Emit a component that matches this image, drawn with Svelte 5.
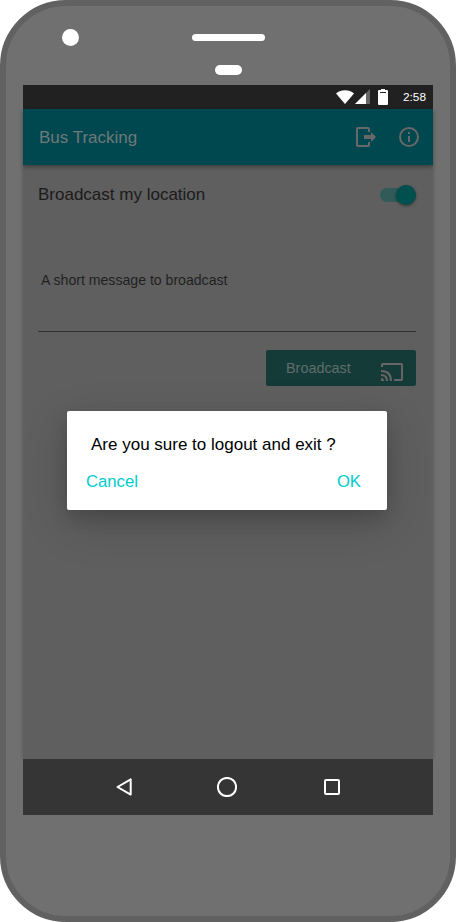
<script>
  let enabled = $state(true);
</script>

<div class="phone">
  <div class="top">
    <span class="camera"></span>
    <div class="ear"><span class="speaker"></span><span class="sensor"></span></div>
  </div>
  <div class="screen">
    <div class="status">
      <svg class="wifi" width="18" height="14" viewBox="0 0 18 14"><path d="M0 3.4C5-.9 13-.9 18 3.4L9 14z" fill="#fff"/></svg>
      <svg class="signal" width="15" height="15" viewBox="0 0 15 15"><path d="M0 15L15 0V15z" fill="#666"/><path d="M0 15L11 4V15z" fill="#fff"/></svg>
      <svg class="battery" width="10" height="16" viewBox="0 0 10 16"><path d="M1 1H3V0H7V1H9Q10 1 10 2V15Q10 16 9 16H1Q0 16 0 15V2Q0 1 1 1z" fill="#fff"/><path d="M2 3H8V4H2z" fill="#212121"/></svg>
      <span class="time">2:58</span>
    </div>
    <header>
      <h1>Bus Tracking</h1>
      <svg class="exit" width="22" height="22" viewBox="0 0 22 22"><path d="M14 6V3Q14 2 13 2H3Q2 2 2 3V19Q2 20 3 20H13Q14 20 14 19V16" fill="none" stroke="#686868" stroke-width="2"/><path d="M9 9H16V6L21 11L16 16V13H9z" fill="#686868"/></svg>
      <svg class="info" width="20" height="20" viewBox="0 0 20 20"><circle cx="10" cy="10" r="9" fill="none" stroke="#686868" stroke-width="2"/><path d="M9 5H11V7H9zM9 9H11V15H9z" fill="#686868"/></svg>
    </header>
    <main>
      <div class="setting">
        <span>Broadcast my location</span>
        <button class="switch" class:off={!enabled} aria-label="Broadcast my location" onclick={() => (enabled = !enabled)}><span class="knob"></span></button>
      </div>
      <div class="field">A short message to broadcast</div>
      <button class="send"><span>Broadcast</span>
        <svg width="22" height="18" viewBox="0 0 22 18"><path d="M1 4V1.8Q1 1 1.8 1H20.2Q21 1 21 1.8V16.2Q21 17 20.2 17H13M0 8Q10 8 10 18M0 12Q6 12 6 18" fill="none" stroke="#666" stroke-width="2"/><path d="M0 15Q3 15 3 18H0z" fill="#666"/></svg>
      </button>
    </main>
    <nav>
      <svg class="back" width="16" height="18" viewBox="0 0 16 18"><path d="M14.7 1.4V16.6L1.5 9z"/></svg>
      <svg class="home" width="20" height="20" viewBox="0 0 20 20"><circle cx="10" cy="10" r="9.1"/></svg>
      <svg class="recent" width="16" height="16" viewBox="0 0 16 16"><rect x="1" y="1" width="14" height="14" rx="1"/></svg>
    </nav>
    <div class="dialog" role="dialog" aria-label="Logout">
      <p>Are you sure to logout and exit ?</p>
      <div class="actions"><button>Cancel</button><button>OK</button></div>
    </div>
  </div>
</div>

<style>
  :global(body) { margin: 0; background: #fff; }
  .phone { box-sizing: border-box; width: 456px; height: 922px; background: #707070; border: 6px solid #616161; border-radius: 66px; padding: 0 17px; font-family: "Liberation Sans", Arial, sans-serif; }
  svg { display: block; flex: none; }
  button { font: inherit; border: 0; padding: 0; background: none; text-align: left; }
  .top { height: 79px; display: flex; }
  .camera { width: 17px; height: 17px; border-radius: 50%; background: #fff; margin: 23px 0 0 39px; }
  .ear { margin: 28px 0 0 113px; width: 73px; display: flex; flex-direction: column; align-items: center; gap: 24px; }
  .speaker { width: 73px; height: 7px; border-radius: 4px; background: #fff; }
  .sensor { width: 27px; height: 10px; border-radius: 5px; background: #fff; }
  .screen { position: relative; width: 410px; height: 730px; display: flex; flex-direction: column; }
  .status { height: 24px; background: #212121; display: flex; align-items: flex-start; color: #fff; }
  .wifi { margin: 5px 0 0 313px; }
  .signal { margin: 4px 0 0 1px; }
  .battery { margin: 4px 0 0 8px; }
  .time { font-size: 11.8px; line-height: 24px; margin-left: 15px; }
  header { position: relative; z-index: 1; height: 56px; background: #00484f; box-shadow: 0 2px 4px rgba(0,0,0,.35); display: flex; align-items: center; }
  h1 { margin: 2px 0 0 16px; width: 316px; font-size: 17px; font-weight: 400; line-height: 20px; color: #707879; }
  .info { margin-left: 22px; }
  main { height: 594px; background: #5f5f5f; box-shadow: 0 0 4px rgba(0,0,0,.22); padding: 0 17px 0 15px; box-sizing: border-box; display: flex; flex-direction: column; }
  .setting { height: 60px; display: flex; align-items: center; justify-content: space-between; font-size: 17px; color: #1b1b1b; }
  .switch { width: 36px; height: 14px; border-radius: 7px; background: #305b59; display: flex; align-items: center; justify-content: flex-end; }
  .off { justify-content: flex-start; }
  .knob { width: 20px; height: 20px; flex: none; border-radius: 50%; background: #00504f; box-shadow: 0 1px 3px rgba(0,0,0,.45); }
  .field { margin-top: 46px; height: 60px; border-bottom: 1px solid #303332; padding-left: 3px; font-size: 14.1px; line-height: 18px; color: #1f1f1f; }
  .send { align-self: flex-end; margin-top: 18px; width: 150px; height: 36px; background: #143b38; border-radius: 2px; display: flex; align-items: center; font-size: 14.4px; color: #5f6e6c; }
  .send span { margin-left: 20px; width: 95px; }
  .send svg { margin-top: 8px; }
  nav { height: 56px; background: #353535; display: flex; align-items: center; }
  nav svg { fill: none; stroke: #fff; stroke-width: 2; stroke-linejoin: round; }
  .back { margin-left: 93px; }
  .home { margin-left: 85px; }
  .recent { margin-left: 87px; }
  .dialog { position: absolute; z-index: 2; left: 44px; top: 326px; width: 320px; height: 99px; box-sizing: border-box; padding: 24px 26px 0 19px; background: #fff; border-radius: 2px; box-shadow: 0 14px 45px rgba(0,0,0,.17), 0 8px 18px rgba(0,0,0,.14); }
  p { margin: 0 0 0 5px; font-size: 17px; line-height: 20px; color: #000; white-space: nowrap; }
  .actions { display: flex; justify-content: space-between; margin-top: 17px; font-size: 16.7px; line-height: 20px; }
  .actions button { color: #00cccd; }
</style>
